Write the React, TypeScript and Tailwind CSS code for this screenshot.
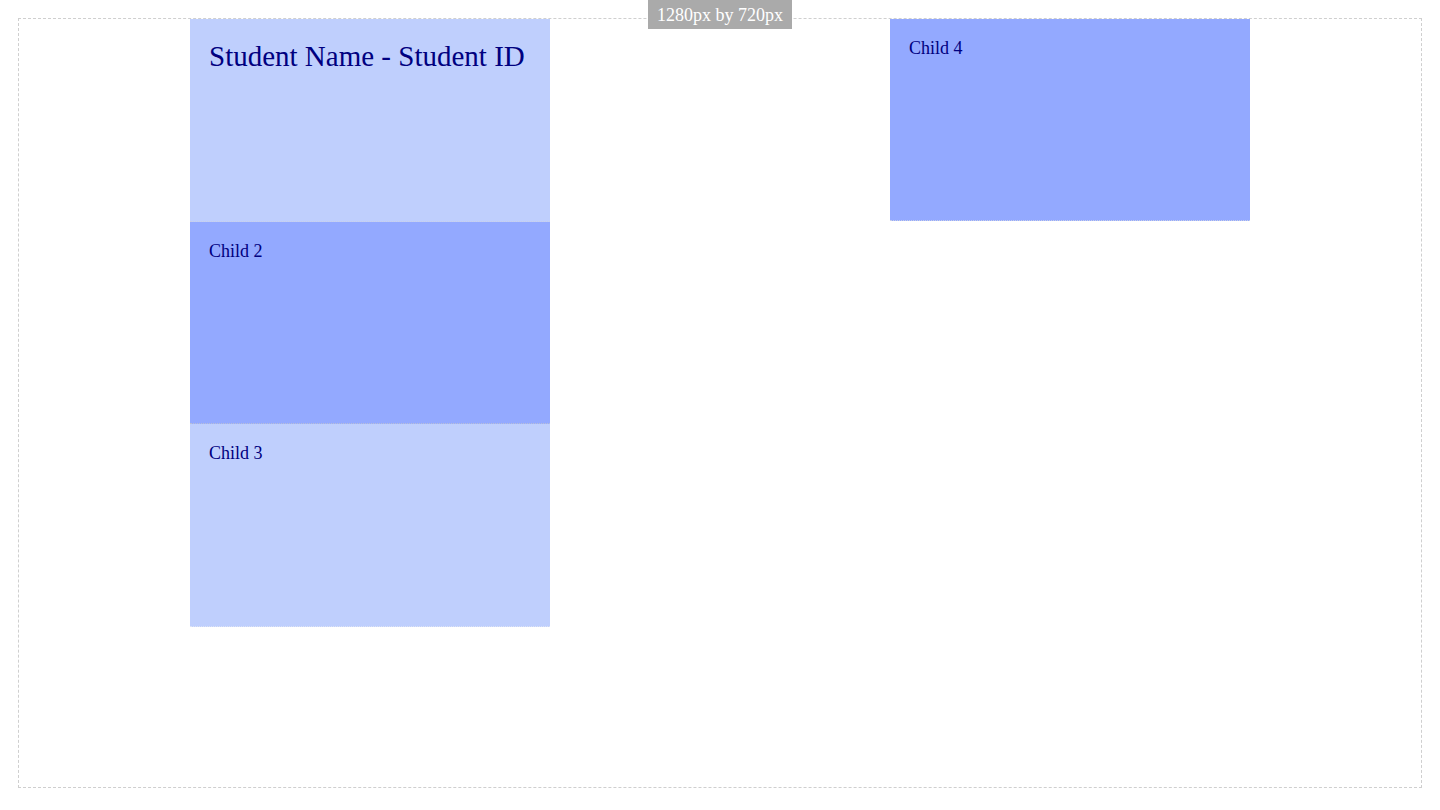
export default function App() {
  const serif = { fontFamily: '"Liberation Serif", "Times New Roman", serif' };
  return (
    <div className="relative h-[810px] w-[1440px] bg-white" style={serif}>
      <div className="absolute left-1/2 top-0 z-10 flex h-[29px] w-[144px] -translate-x-1/2 items-center justify-center bg-[#aaaaaa] text-[18px] leading-none text-white">
        1280px by 720px
      </div>
      <div className="absolute left-[18px] top-[18px] h-[770px] w-[1404px] border border-dashed border-[#cfcfcf]">
        <div className="flex items-start justify-between px-[171px]">
          <div className="flex w-[360px] flex-col">
            <div className="h-[203px] border-b border-dotted border-[#c8cfe8] bg-[#bfcffd] px-[19px] pt-[21px] text-[29px] leading-[33px] text-[#000080]">
              Student Name - Student ID
            </div>
            <div className="h-[202px] border-b border-dotted border-[#b8bfd8] bg-[#93a9ff] px-[19px] pt-[19px] text-[18px] leading-[21px] text-[#000080]">
              Child 2
            </div>
            <div className="h-[203px] border-b border-dotted border-[#dde3f5] bg-[#bfcffd] px-[19px] pt-[19px] text-[18px] leading-[21px] text-[#000080]">
              Child 3
            </div>
          </div>
          <div className="h-[202px] w-[360px] border-b border-dotted border-[#c8cfe8] bg-[#93a9ff] px-[19px] pt-[19px] text-[18px] leading-[21px] text-[#000080]">
            Child 4
          </div>
        </div>
      </div>
    </div>
  );
}
